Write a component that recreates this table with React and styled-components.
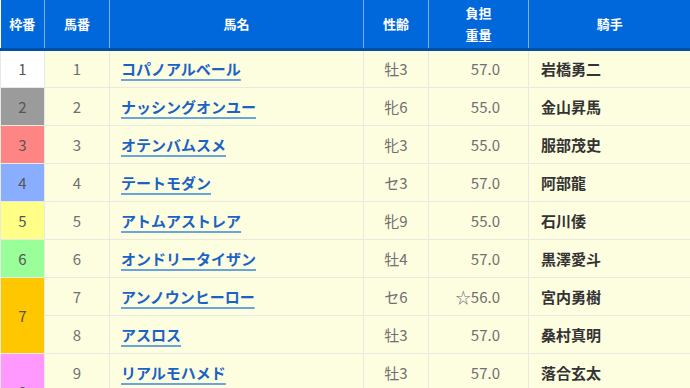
import React from "react";
import styled, { createGlobalStyle } from "styled-components";

const Global = createGlobalStyle`
  html, body { margin: 0; padding: 0; overflow: hidden; background: #fff; }
  body { font-family: "Noto Sans CJK JP", "Noto Sans", sans-serif; }
`;

const Table = styled.table`
  width: 690px;
  table-layout: fixed;
  border-collapse: collapse;
  font-size: 15px;
`;

const HeadRow = styled.tr`
  height: 49px;
  background: #0068da;
  border-bottom: 3px solid #0050a6;
`;

const Th = styled.th`
  color: #fff;
  font-size: 13px;
  font-weight: 700;
  line-height: 22px;
  padding: 0;
  text-align: center;
  border-right: 1px solid #7fb0ee;
  &:last-child { border-right: none; }
`;

const Row = styled.tr`
  height: 38px;
  background: #fdfde0;
`;

const Td = styled.td`
  padding: 0;
  border: 1px solid #e9e9e2;
  color: #707070;
  text-align: ${(p) => p.$align || "center"};
  padding-left: ${(p) => p.$pl || 0}px;
  padding-right: ${(p) => p.$pr || 0}px;
  white-space: nowrap;
`;

const Frame = styled(Td)`
  background: ${(p) => p.$bg};
  color: #555;
`;

const HorseLink = styled.a`
  color: #1b62c6;
  font-weight: 700;
  text-decoration: underline;
  text-decoration-color: #6aa4dc;
  text-decoration-thickness: 2px;
  text-underline-offset: 4px;
  cursor: pointer;
`;

const Jockey = styled(Td)`
  color: #333;
  font-weight: 700;
`;

const frameColors = {
  1: "#ffffff",
  2: "#9b9b9b",
  3: "#ff8585",
  4: "#8aaeff",
  5: "#ffff88",
  6: "#99ff99",
  7: "#ffc700",
  8: "#ff99ff",
};

const rows = [
  { f: 1, span: 1, n: 1, name: "コパノアルベール", sex: "牡3", w: "57.0", j: "岩橋勇二" },
  { f: 2, span: 1, n: 2, name: "ナッシングオンユー", sex: "牝6", w: "55.0", j: "金山昇馬" },
  { f: 3, span: 1, n: 3, name: "オテンバムスメ", sex: "牝3", w: "55.0", j: "服部茂史" },
  { f: 4, span: 1, n: 4, name: "テートモダン", sex: "セ3", w: "57.0", j: "阿部龍" },
  { f: 5, span: 1, n: 5, name: "アトムアストレア", sex: "牝9", w: "55.0", j: "石川倭" },
  { f: 6, span: 1, n: 6, name: "オンドリータイザン", sex: "牡4", w: "57.0", j: "黒澤愛斗" },
  { f: 7, span: 2, n: 7, name: "アンノウンヒーロー", sex: "セ6", w: "☆56.0", j: "宮内勇樹" },
  { f: null, n: 8, name: "アスロス", sex: "牡3", w: "57.0", j: "桑村真明" },
  { f: 8, span: 2, n: 9, name: "リアルモハメド", sex: "牡3", w: "57.0", j: "落合玄太" },
  { f: null, n: 10, name: "ポッドジョイ", sex: "牡4", w: "57.0", j: "小野楓馬" },
];

export default function App() {
  return (
    <>
      <Global />
      <Table>
        <colgroup>
          <col style={{ width: 44 }} />
          <col style={{ width: 65 }} />
          <col style={{ width: 254 }} />
          <col style={{ width: 65 }} />
          <col style={{ width: 100 }} />
          <col style={{ width: 162 }} />
        </colgroup>
        <thead>
          <HeadRow>
            <Th>枠番</Th>
            <Th>馬番</Th>
            <Th>馬名</Th>
            <Th>性齢</Th>
            <Th>
              負担
              <br />
              重量
            </Th>
            <Th>騎手</Th>
          </HeadRow>
        </thead>
        <tbody>
          {rows.map((r) => (
            <Row key={r.n}>
              {r.f !== null && (
                <Frame rowSpan={r.span} $bg={frameColors[r.f]}>
                  {r.f}
                </Frame>
              )}
              <Td>{r.n}</Td>
              <Td $align="left" $pl={11}>
                <HorseLink>{r.name}</HorseLink>
              </Td>
              <Td>{r.sex}</Td>
              <Td $align="right" $pr={28}>
                {r.w}
              </Td>
              <Jockey $align="left" $pl={12}>
                {r.j}
              </Jockey>
            </Row>
          ))}
        </tbody>
      </Table>
    </>
  );
}
